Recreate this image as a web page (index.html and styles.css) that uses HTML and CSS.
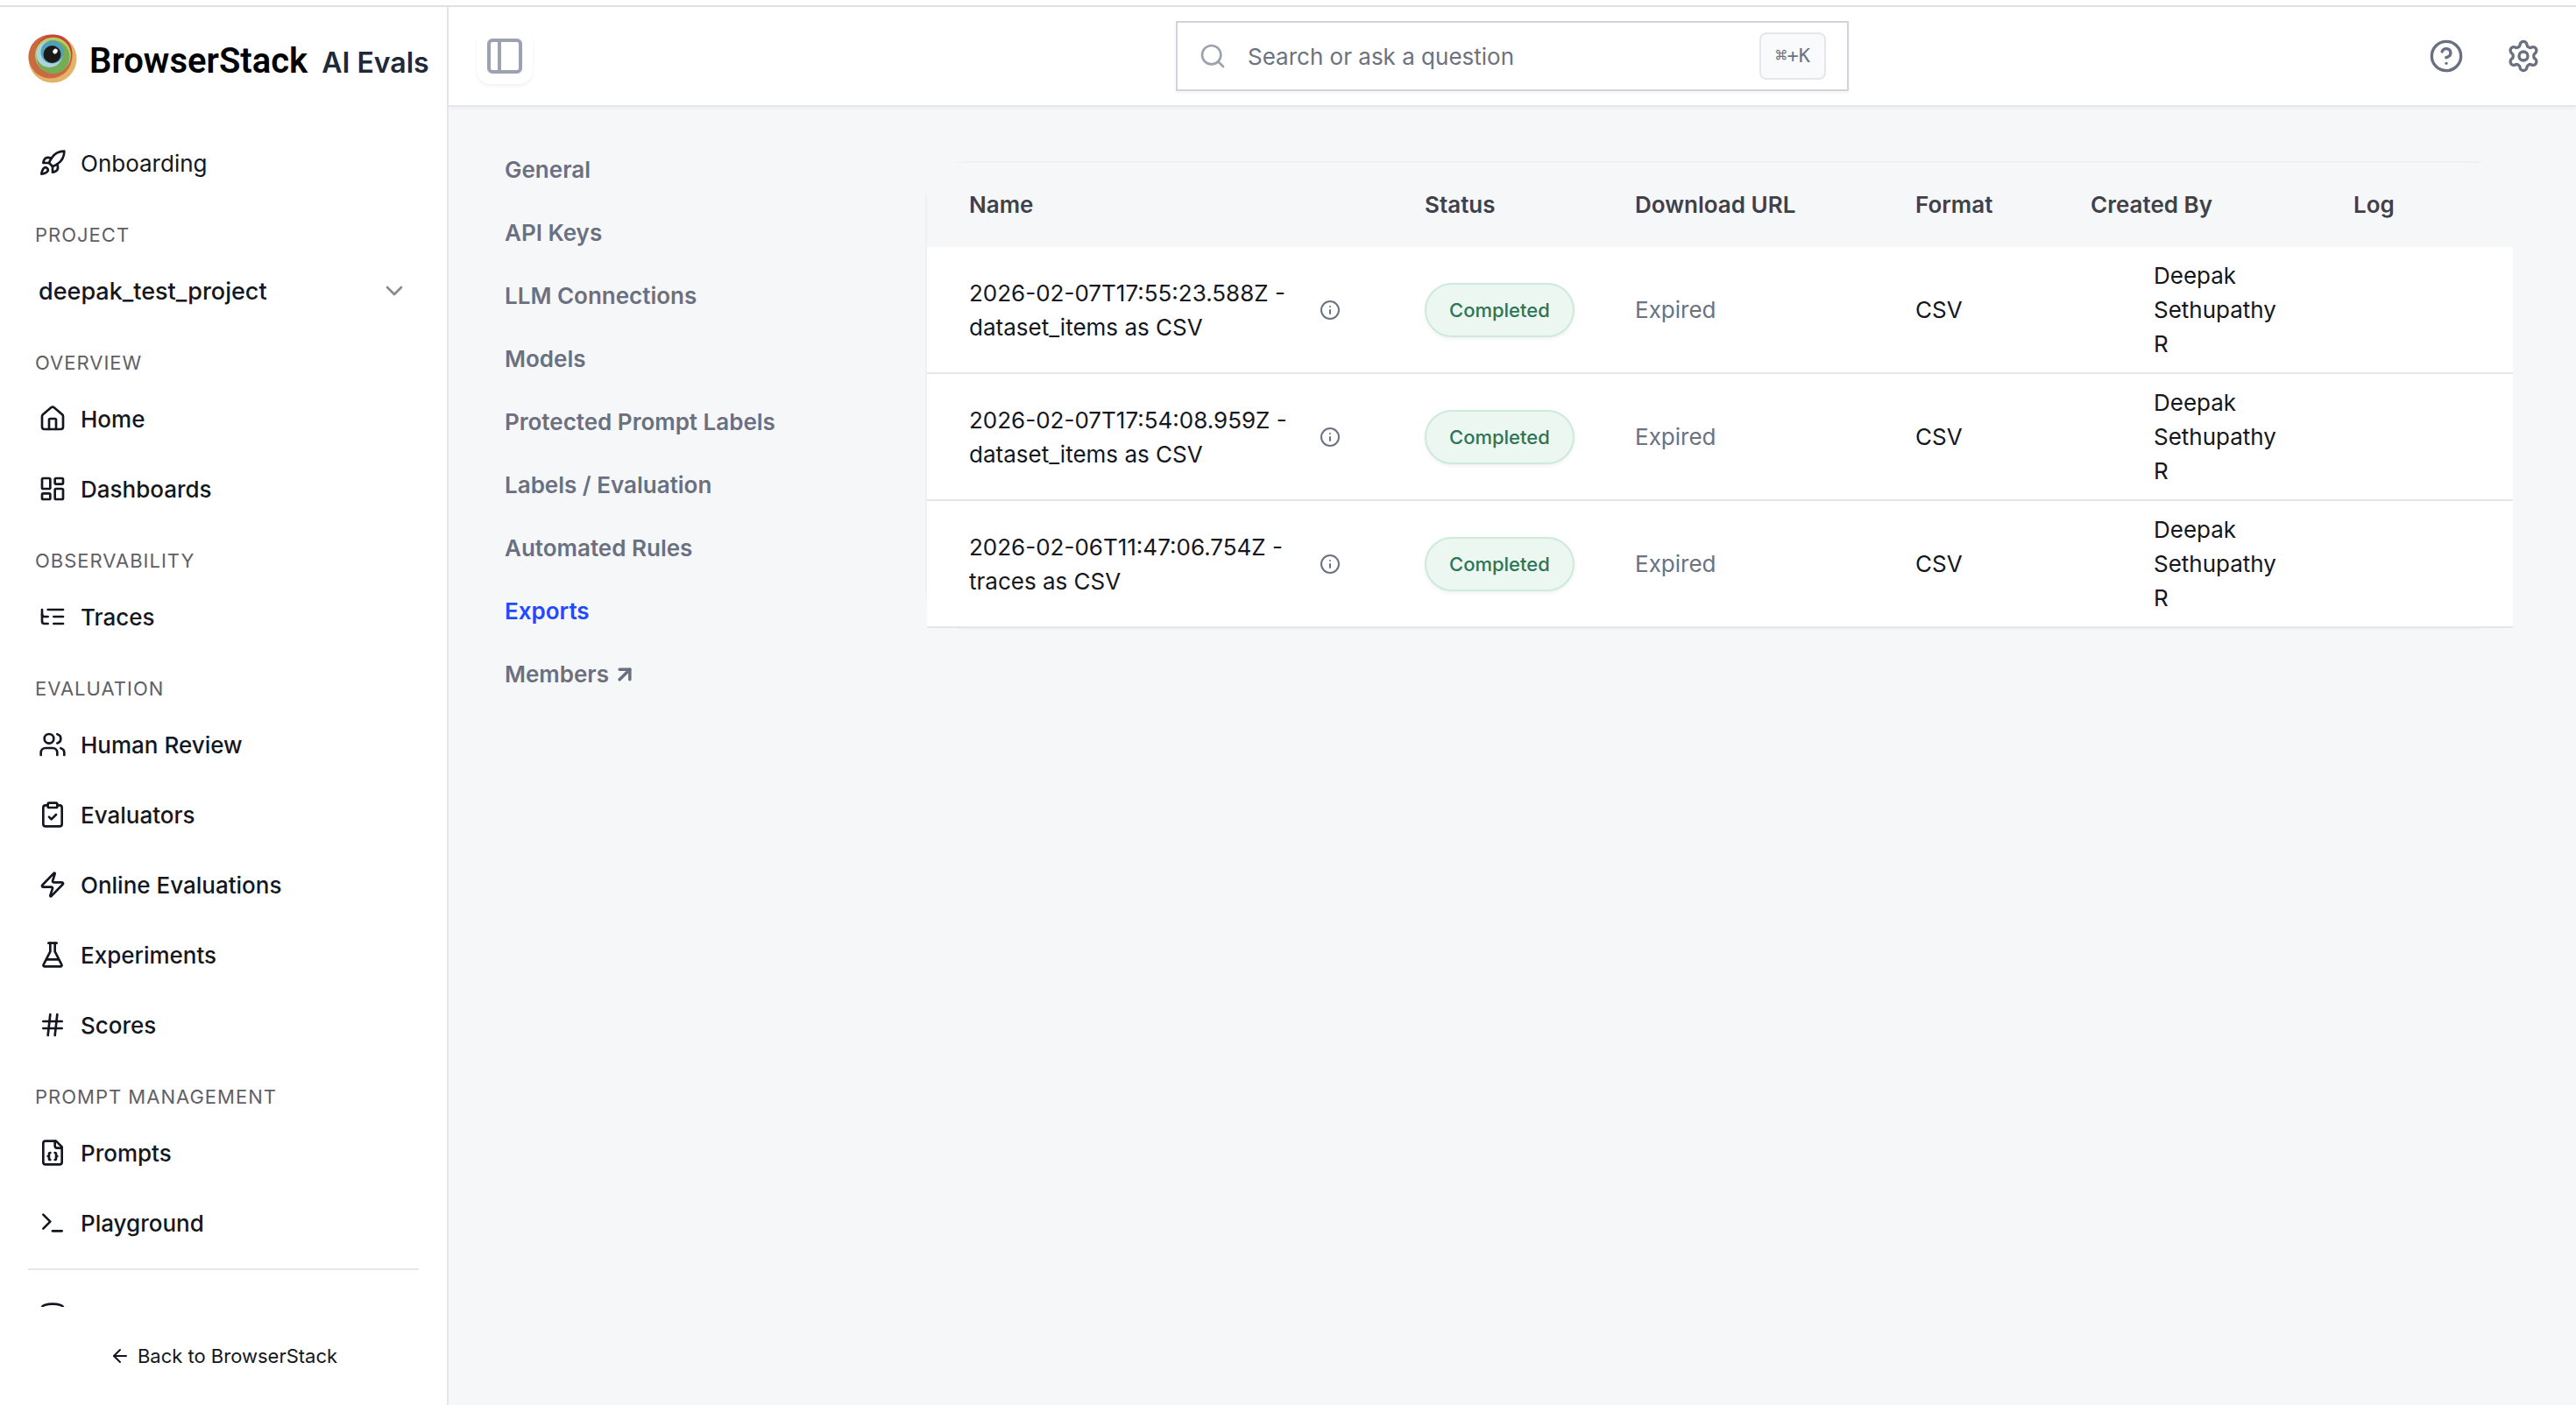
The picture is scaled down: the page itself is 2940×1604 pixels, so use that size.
FILE: index.html
```html
<!DOCTYPE html>
<html lang="en">
<head>
<meta charset="utf-8">
<meta name="viewport" content="width=device-width, initial-scale=1">
<title>Exports - BrowserStack AI Evals</title>
<link rel="stylesheet" href="styles.css">
</head>
<body>
<div class="app">
  <aside class="sidebar">
    <a class="brand" href="#">
      <svg class="brand-mark" viewBox="0 0 56 56" aria-hidden="true">
        <circle cx="28" cy="28" r="27.500" fill="#e4b36a"/>
        <circle cx="25.500" cy="25.500" r="25" fill="#ca6a42"/>
        <circle cx="29.500" cy="21.500" r="21" fill="#c9403f"/>
        <circle cx="28.500" cy="24" r="20.500" fill="#b7cf5a"/>
        <circle cx="28.500" cy="26" r="19" fill="#75ad57"/>
        <circle cx="24.500" cy="23" r="15" fill="#aed3dc"/>
        <circle cx="27.500" cy="20.500" r="13" fill="#4f9fbe"/>
        <circle cx="27.500" cy="23" r="10" fill="#1c1a19"/>
        <ellipse cx="31" cy="19.500" rx="2.500" ry="3" fill="#fff" transform="rotate(35 31 19.500)"/>
      </svg>
      <span class="brand-text">
        <span class="brand-name">BrowserStack</span>
        <span class="brand-product">AI Evals</span>
      </span>
    </a>
    <nav class="side-nav" aria-label="Main">
      <a class="nav-item nav-item-light" href="#"><svg class="icon" viewBox="0 0 24 24"><path d="M4.500 16.500c-1.500 1.260-2 5-2 5s3.740-.5 5-2c.71-.84.7-2.130-.09-2.910a2.180 2.180 0 0 0-2.910-.09z"/><path d="m12 15-3-3a22 22 0 0 1 2-3.950A12.880 12.880 0 0 1 22 2c0 2.720-.78 7.500-6 11a22.350 22.350 0 0 1-4 2z"/><path d="M9 12H4s.55-3.030 2-4c1.620-1.080 5 0 5 0"/><path d="M12 15v5s3.030-.55 4-2c1.080-1.620 0-5 0-5"/></svg>Onboarding</a>
      <label class="nav-label" for="project">PROJECT</label>
      <div class="project-picker">
        <select id="project"><option>deepak_test_project</option></select>
        <svg class="icon" viewBox="0 0 24 24"><path d="m6 9 6 6 6-6"/></svg>
      </div>
      <h2 class="nav-label">OVERVIEW</h2>
      <a class="nav-item" href="#"><svg class="icon" viewBox="0 0 24 24"><path d="M15 21v-8a1 1 0 0 0-1-1h-4a1 1 0 0 0-1 1v8"/><path d="M3 10a2 2 0 0 1 .709-1.528l7-5.999a2 2 0 0 1 2.582 0l7 5.999A2 2 0 0 1 21 10v9a2 2 0 0 1-2 2H5a2 2 0 0 1-2-2z"/></svg>Home</a>
      <a class="nav-item" href="#"><svg class="icon" viewBox="0 0 24 24"><rect width="7" height="9" x="3" y="3" rx="1"/><rect width="7" height="5" x="14" y="3" rx="1"/><rect width="7" height="9" x="14" y="12" rx="1"/><rect width="7" height="5" x="3" y="16" rx="1"/></svg>Dashboards</a>
      <h2 class="nav-label">OBSERVABILITY</h2>
      <a class="nav-item" href="#"><svg class="icon" viewBox="0 0 24 24"><path d="M21 12h-8"/><path d="M21 6H8"/><path d="M21 18h-8"/><path d="M3 6v4c0 1.100.9 2 2 2h3"/><path d="M3 10v6c0 1.100.9 2 2 2h3"/></svg>Traces</a>
      <h2 class="nav-label">EVALUATION</h2>
      <a class="nav-item" href="#"><svg class="icon" viewBox="0 0 24 24"><path d="M16 21v-2a4 4 0 0 0-4-4H6a4 4 0 0 0-4 4v2"/><circle cx="9" cy="7" r="4"/><path d="M22 21v-2a4 4 0 0 0-3-3.870"/><path d="M16 3.130a4 4 0 0 1 0 7.750"/></svg>Human Review</a>
      <a class="nav-item" href="#"><svg class="icon" viewBox="0 0 24 24"><rect width="8" height="4" x="8" y="2" rx="1"/><path d="M16 4h2a2 2 0 0 1 2 2v14a2 2 0 0 1-2 2H6a2 2 0 0 1-2-2V6a2 2 0 0 1 2-2h2"/><path d="m9 14 2 2 4-4"/></svg>Evaluators</a>
      <a class="nav-item" href="#"><svg class="icon" viewBox="0 0 24 24"><path d="M4 14a1 1 0 0 1-.78-1.630l9.900-10.200a.5.5 0 0 1 .86.46l-1.920 6.020A1 1 0 0 0 13 10h7a1 1 0 0 1 .78 1.630l-9.900 10.200a.5.5 0 0 1-.86-.46l1.920-6.020A1 1 0 0 0 11 14z"/></svg>Online Evaluations</a>
      <a class="nav-item" href="#"><svg class="icon" viewBox="0 0 24 24"><path d="M10 2v7.310L4.200 20.500A1 1 0 0 0 5 22h14a1 1 0 0 0 .8-1.500L14 9.300V2"/><path d="M8.500 2h7"/><path d="M7 16h10"/></svg>Experiments</a>
      <a class="nav-item" href="#"><svg class="icon" viewBox="0 0 24 24"><path d="M4 9h16"/><path d="M4 15h16"/><path d="M10 3 8 21"/><path d="m16 3-2 18"/></svg>Scores</a>
      <h2 class="nav-label">PROMPT MANAGEMENT</h2>
      <a class="nav-item" href="#"><svg class="icon" viewBox="0 0 24 24"><path d="M15 2H6a2 2 0 0 0-2 2v16a2 2 0 0 0 2 2h12a2 2 0 0 0 2-2V7Z"/><path d="M14 2v4a2 2 0 0 0 2 2h4"/><path d="M10 12a1 1 0 0 0-1 1v1a1 1 0 0 1-1 1 1 1 0 0 1 1 1v1a1 1 0 0 0 1 1"/><path d="M14 18a1 1 0 0 0 1-1v-1a1 1 0 0 1 1-1 1 1 0 0 1-1-1v-1a1 1 0 0 0-1-1"/></svg>Prompts</a>
      <a class="nav-item" href="#"><svg class="icon" viewBox="0 0 24 24"><path d="m4 17 6-6-6-6"/><path d="M12 19h8"/></svg>Playground</a>
      <hr class="nav-rule">
      <a class="nav-item" href="#" aria-label="Datasets"><svg class="icon" viewBox="0 0 24 24"><ellipse cx="12" cy="5" rx="9" ry="3"/><path d="M3 5v14a9 3 0 0 0 18 0V5"/><path d="M3 12a9 3 0 0 0 18 0"/></svg></a>
    </nav>
    <a class="back-link" href="#"><svg class="icon icon-sm" viewBox="0 0 24 24"><path d="m12 19-7-7 7-7"/><path d="M19 12H5"/></svg>Back to BrowserStack</a>
  </aside>

  <div class="content">
    <header class="topbar">
      <button class="panel-toggle" type="button" aria-label="Toggle sidebar"><svg class="icon icon-xl" viewBox="0 0 24 24"><rect width="18" height="18" x="3" y="3" rx="2"/><path d="M9 3v18"/></svg></button>
      <div class="search">
        <svg class="icon" viewBox="0 0 24 24"><circle cx="11" cy="11" r="8"/><path d="m21 21-4.300-4.300"/></svg>
        <input type="text" placeholder="Search or ask a question" aria-label="Search or ask a question">
        <kbd>⌘+K</kbd>
      </div>
      <div class="topbar-actions">
        <button type="button" aria-label="Help"><svg class="icon icon-lg" viewBox="0 0 24 24"><circle cx="12" cy="12" r="10"/><path d="M9.090 9a3 3 0 0 1 5.830 1c0 2-3 3-3 3"/><path d="M12 17h.01"/></svg></button>
        <button type="button" aria-label="Settings"><svg class="icon icon-lg" viewBox="0 0 24 24"><path d="M9.671 4.136a2.340 2.340 0 0 1 4.659 0 2.340 2.340 0 0 0 3.319 1.915 2.340 2.340 0 0 1 2.330 4.033 2.340 2.340 0 0 0 0 3.831 2.340 2.340 0 0 1-2.330 4.033 2.340 2.340 0 0 0-3.319 1.915 2.340 2.340 0 0 1-4.659 0 2.340 2.340 0 0 0-3.320-1.915 2.340 2.340 0 0 1-2.330-4.033 2.340 2.340 0 0 0 0-3.831A2.340 2.340 0 0 1 6.350 6.051a2.340 2.340 0 0 0 3.319-1.915"/><circle cx="12" cy="12" r="3"/></svg></button>
      </div>
    </header>

    <main class="page">
      <nav class="settings-nav" aria-label="Settings">
        <a href="#">General</a>
        <a href="#">API Keys</a>
        <a href="#">LLM Connections</a>
        <a href="#">Models</a>
        <a href="#">Protected Prompt Labels</a>
        <a href="#">Labels / Evaluation</a>
        <a href="#">Automated Rules</a>
        <a class="active" href="#" aria-current="page">Exports</a>
        <a href="#">Members<svg class="icon icon-link" viewBox="0 0 24 24"><path d="M7 7h10v10"/><path d="M7 17 17 7"/></svg></a>
      </nav>
      <section class="table-card">
        <table>
          <colgroup><col class="col-name"><col class="col-status"><col class="col-url"><col class="col-format"><col class="col-creator"><col class="col-log"></colgroup>
          <thead>
            <tr><th>Name</th><th>Status</th><th>Download URL</th><th>Format</th><th>Created By</th><th>Log</th></tr>
          </thead>
          <tbody>
            <tr>
              <td><div class="export-name"><span>2026-02-07T17:55:23.588Z - dataset_items as CSV</span><svg class="icon icon-sm" viewBox="0 0 24 24"><circle cx="12" cy="12" r="10"/><path d="M12 16v-4"/><path d="M12 8h.01"/></svg></div></td>
              <td><span class="badge">Completed</span></td>
              <td class="muted">Expired</td>
              <td>CSV</td>
              <td><div class="creator">Deepak Sethupathy R</div></td>
              <td></td>
            </tr>
            <tr>
              <td><div class="export-name"><span>2026-02-07T17:54:08.959Z - dataset_items as CSV</span><svg class="icon icon-sm" viewBox="0 0 24 24"><circle cx="12" cy="12" r="10"/><path d="M12 16v-4"/><path d="M12 8h.01"/></svg></div></td>
              <td><span class="badge">Completed</span></td>
              <td class="muted">Expired</td>
              <td>CSV</td>
              <td><div class="creator">Deepak Sethupathy R</div></td>
              <td></td>
            </tr>
            <tr>
              <td><div class="export-name"><span>2026-02-06T11:47:06.754Z - traces as CSV</span><svg class="icon icon-sm" viewBox="0 0 24 24"><circle cx="12" cy="12" r="10"/><path d="M12 16v-4"/><path d="M12 8h.01"/></svg></div></td>
              <td><span class="badge">Completed</span></td>
              <td class="muted">Expired</td>
              <td>CSV</td>
              <td><div class="creator">Deepak Sethupathy R</div></td>
              <td></td>
            </tr>
          </tbody>
        </table>
      </section>
    </main>
  </div>
</div>
</body>
</html>
```
FILE: styles.css
```css
*, *::before, *::after { box-sizing: border-box; }

body {
  margin: 0;
  font-family: Inter, "Liberation Sans", sans-serif;
  font-size: 26px;
  line-height: 39px;
  color: #141720;
  background: #f6f7f9;
}

a { color: inherit; text-decoration: none; }
button { border: 0; padding: 0; background: none; color: inherit; font: inherit; }

.icon {
  width: 32px;
  height: 32px;
  flex: none;
  fill: none;
  stroke: currentColor;
  stroke-width: 2;
  stroke-linecap: round;
  stroke-linejoin: round;
}
.icon-sm { width: 24px; height: 24px; }
.icon-link { width: 28px; height: 28px; stroke-width: 3; }
.icon-lg { width: 40px; height: 40px; }
.icon-xl { width: 48px; height: 48px; }

.app {
  display: grid;
  grid-template-columns: 512px 1fr;
  height: 100vh;
  padding-top: 6px;
  background: #fff;
}
.sidebar, .content { border-top: 2px solid #e0e0e0; min-height: 0; }

/* Sidebar */
.sidebar {
  display: flex;
  flex-direction: column;
  box-shadow: inset -2px 0 #e5e6eb;
  padding-right: 2px;
}
.brand {
  display: flex;
  align-items: center;
  gap: 14px;
  height: 138px;
  padding: 0 0 20px 32px;
  white-space: nowrap;
  flex: none;
}
.brand-mark { width: 56px; height: 56px; flex: none; }
.brand-text { display: flex; align-items: baseline; gap: 16px; padding-top: 6px; }
.brand-name {
  font: 600 40px/56px Roboto, "Open Sans", sans-serif;
  color: #000;
}
.brand-product { font-size: 32px; line-height: 48px; font-weight: 600; color: #1f2937; }

.side-nav { flex: 1; min-height: 0; overflow: hidden; padding: 0 32px; }
.nav-item {
  display: flex;
  align-items: center;
  gap: 16px;
  height: 80px;
  padding-left: 12px;
  font-weight: 500;
}
.nav-item-light { font-weight: 400; }
.nav-label {
  display: block;
  margin: 0;
  padding: 26px 8px 8px;
  font-size: 22px;
  line-height: 32px;
  font-weight: 400;
  letter-spacing: 1px;
  color: #5f6067;
}
.project-picker {
  display: grid;
  align-items: center;
  height: 80px;
  padding: 0 12px;
}
.project-picker > * { grid-area: 1 / 1; }
.project-picker select {
  appearance: none;
  border: 0;
  padding: 0;
  background: none;
  font: inherit;
  font-size: 27px;
  font-weight: 500;
  color: inherit;
}
.project-picker .icon { justify-self: end; color: #8b8b8f; pointer-events: none; }
.nav-rule { margin: 12px 0; border: 0; border-top: 2px solid #e7e8ed; }
.back-link {
  display: flex;
  align-items: center;
  justify-content: center;
  gap: 8px;
  height: 112px;
  flex: none;
  font-size: 22px;
}

/* Top bar */
.content { display: flex; flex-direction: column; background: #f6f7f9; min-width: 0; }
.topbar {
  display: grid;
  grid-template-columns: 1fr minmax(0, 768px) 1fr;
  align-items: center;
  height: 114px;
  padding: 0 32px;
  background: #fff;
  border-bottom: 2px solid #e5e7eb;
  box-shadow: 0 2px 4px rgba(0, 0, 0, .04);
}
.panel-toggle {
  display: grid;
  place-items: center;
  width: 64px;
  height: 64px;
  border-radius: 16px;
  color: #9ca3af;
  box-shadow: 0 2px 4px rgba(0, 0, 0, .06);
}
.search {
  display: flex;
  align-items: center;
  gap: 24px;
  height: 80px;
  padding: 0 24px;
  border: 2px solid #d1d5db;
  background: #fff;
  box-shadow: 0 2px 4px rgba(0, 0, 0, .05);
}
.search .icon { color: #9ca3af; }
.search input {
  flex: 1;
  min-width: 0;
  border: 0;
  padding: 0;
  background: none;
  outline: 0;
  font: inherit;
}
.search input::placeholder { color: #6b7280; opacity: 1; }
.search kbd {
  padding: 0 16px;
  border: 2px solid #e5e7eb;
  border-radius: 8px;
  background: #f9fafb;
  font: 22px/50px "DejaVu Sans Mono", monospace;
  color: #6b7280;
}
.topbar-actions { display: flex; justify-content: flex-end; gap: 32px; color: #6b7080; }
.topbar-actions button { display: grid; padding: 8px; }

/* Settings page */
.page {
  display: grid;
  grid-template-columns: 416px 1fr;
  gap: 64px;
  align-items: start;
  padding: 62px 70px 62px 64px;
}
.settings-nav {
  display: flex;
  flex-direction: column;
  gap: 32px;
  margin-top: -10px;
  font-weight: 600;
  line-height: 40px;
  color: #6b7080;
}
.settings-nav a { display: flex; align-items: center; gap: 4px; }
.settings-nav .active { color: #1f4bff; }

.table-card {
  border: 2px solid #eff0f2;
  border-right-color: transparent;
  border-radius: 48px;
}
table { width: 100%; border-collapse: collapse; table-layout: fixed; }
.col-name { width: 520px; }
.col-status { width: 240px; }
.col-url { width: 320px; }
.col-format { width: 200px; }
.col-creator { width: 300px; }
th, td { padding: 13px 24px 13px 48px; text-align: left; }
th { height: 96px; padding-bottom: 15px; background: #f6f7f9; font-weight: 600; color: #3f4149; }
td { background: #fff; border-bottom: 2px solid #e5e6eb; }
.export-name { display: flex; align-items: center; gap: 24px; padding-right: 24px; }
.export-name span { flex: 1; }
.export-name .icon, .muted { color: #6b7280; }
.badge {
  display: inline-block;
  padding: 0 26px;
  border: 2px solid #cdeadd;
  border-radius: 32px;
  background: #ecf7f1;
  box-shadow: 0 2px 4px rgba(0, 0, 0, .06);
  font-size: 22px;
  line-height: 58px;
  font-weight: 500;
  color: #2c7556;
}
.creator { padding-left: 72px; }
```
